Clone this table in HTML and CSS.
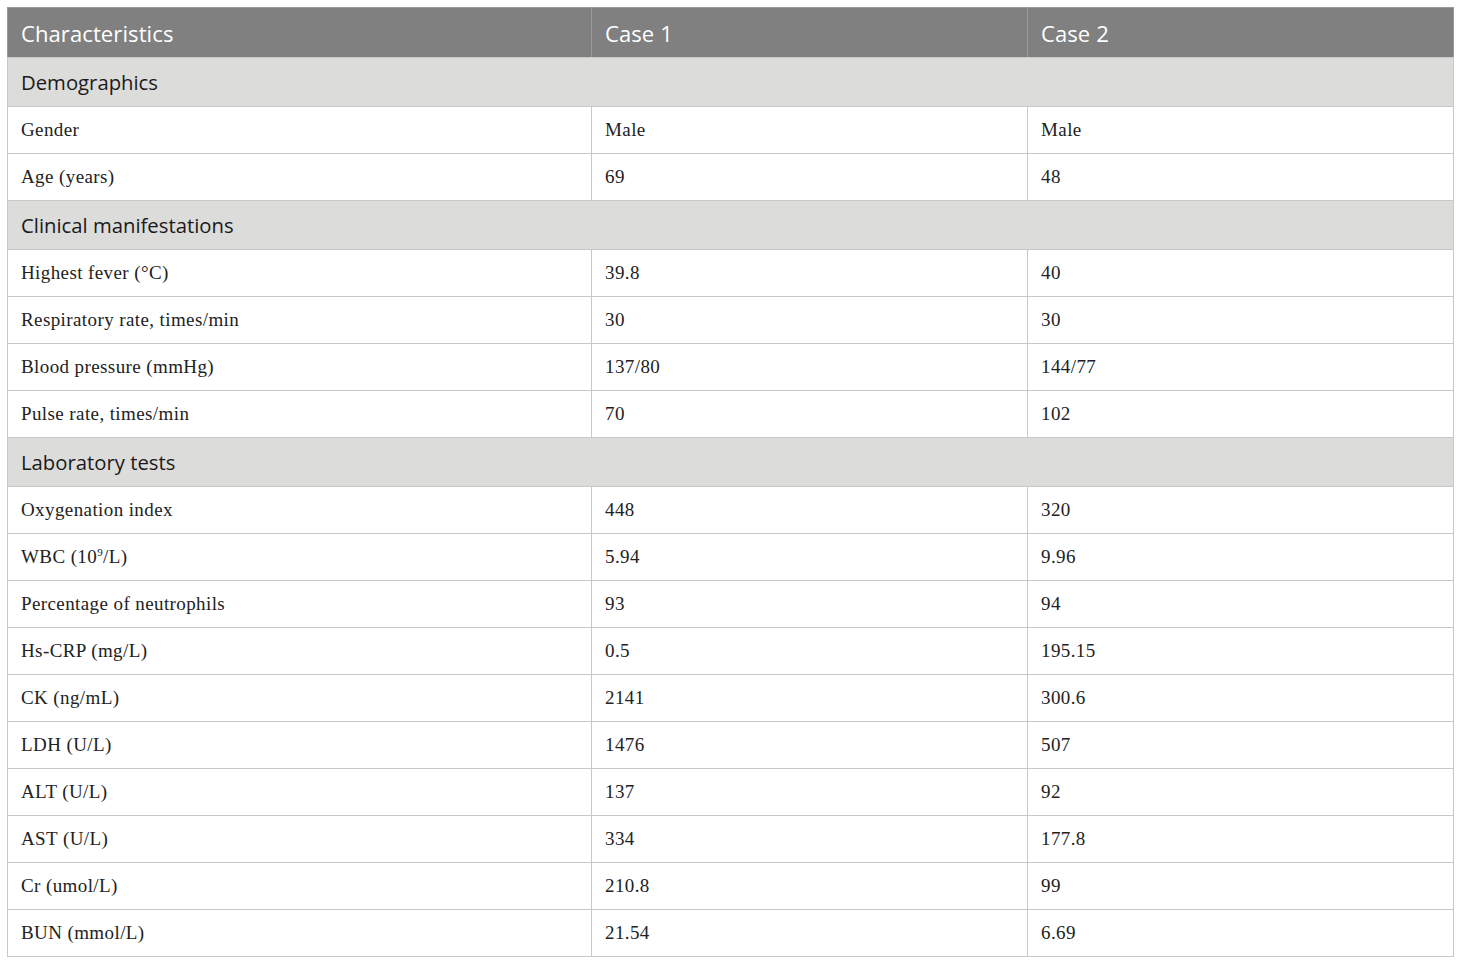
FILE: index.html
```html
<!DOCTYPE html>
<html>
<head>
<meta charset="utf-8">
<link rel="stylesheet" href="styles.css">
</head>
<body>
<div class="page">
<table class="data">
<colgroup><col class="c1"><col class="c2"><col class="c3"></colgroup>
<thead>
<tr class="head"><th>Characteristics</th><th>Case 1</th><th>Case 2</th></tr>
</thead>
<tbody>
<tr class="section"><td colspan="3">Demographics</td></tr>
<tr><td>Gender</td><td>Male</td><td>Male</td></tr>
<tr><td>Age (years)</td><td>69</td><td>48</td></tr>
<tr class="section"><td colspan="3">Clinical manifestations</td></tr>
<tr><td>Highest fever (°C)</td><td>39.8</td><td>40</td></tr>
<tr><td>Respiratory rate, times/min</td><td>30</td><td>30</td></tr>
<tr><td>Blood pressure (mmHg)</td><td>137/80</td><td>144/77</td></tr>
<tr><td>Pulse rate, times/min</td><td>70</td><td>102</td></tr>
<tr class="section"><td colspan="3">Laboratory tests</td></tr>
<tr><td>Oxygenation index</td><td>448</td><td>320</td></tr>
<tr><td>WBC (10<sup>9</sup>/L)</td><td>5.94</td><td>9.96</td></tr>
<tr><td>Percentage of neutrophils</td><td>93</td><td>94</td></tr>
<tr><td>Hs-CRP (mg/L)</td><td>0.5</td><td>195.15</td></tr>
<tr><td>CK (ng/mL)</td><td>2141</td><td>300.6</td></tr>
<tr><td>LDH (U/L)</td><td>1476</td><td>507</td></tr>
<tr><td>ALT (U/L)</td><td>137</td><td>92</td></tr>
<tr><td>AST (U/L)</td><td>334</td><td>177.8</td></tr>
<tr><td>Cr (umol/L)</td><td>210.8</td><td>99</td></tr>
<tr><td>BUN (mmol/L)</td><td>21.54</td><td>6.69</td></tr>
</tbody>
</table>
</div>
</body>
</html>
```
FILE: styles.css
```css
html, body {
  margin: 0;
  padding: 0;
  background: #ffffff;
}
.page {
  padding: 7px 7px 0 7px;
}
.data {
  width: 1446px;
  border-collapse: collapse;
  table-layout: fixed;
  border: 1px solid #c4c4c4;
}
.c1 { width: 584px; }
.c2 { width: 436px; }
.c3 { width: 426px; }
.data th, .data td {
  text-align: left;
  padding: 0 0 0 13px;
  border: 1px solid #c8c8c8;
  vertical-align: middle;
}
.head th {
  background: #808080;
  color: #ffffff;
  font-family: "Open Sans", sans-serif;
  font-weight: normal;
  font-size: 22px;
  letter-spacing: 0.1px;
  height: 49px;
  border-color: #9a9a9a;
  border-bottom-color: #c8c8c8;
}
.data tbody tr td {
  font-family: "Liberation Serif", serif;
  font-size: 19px;
  letter-spacing: 0.4px;
  color: #222222;
  height: 46px;
}
.data tbody tr.section td {
  background: #dcdcdb;
  font-family: "Open Sans", sans-serif;
  font-size: 20.3px;
  letter-spacing: 0;
  color: #1a1a1a;
  height: 48px;
}
sup {
  font-size: 11px;
  vertical-align: 7px;
  line-height: 0;
}
```
